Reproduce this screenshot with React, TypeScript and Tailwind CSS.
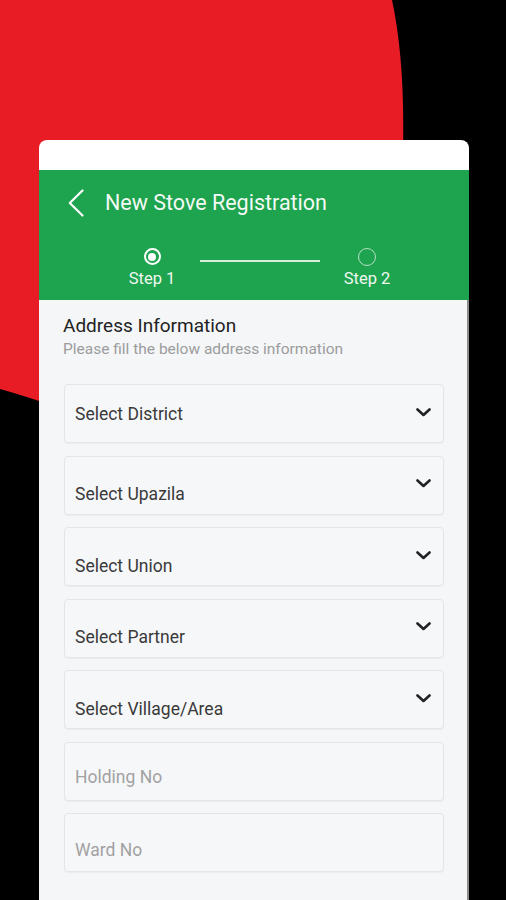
import React from "react";

type FieldTypes = {
  label: string;
  kind: "select" | "input";
  offset: string;
};

const fields: FieldTypes[] = [
  { label: "Select District", kind: "select", offset: "mt-0" },
  { label: "Select Upazila", kind: "select", offset: "mt-[18px]" },
  { label: "Select Union", kind: "select", offset: "mt-[18px]" },
  { label: "Select Partner", kind: "select", offset: "mt-[18px]" },
  { label: "Select Village/Area", kind: "select", offset: "mt-[18px]" },
  { label: "Holding No", kind: "input", offset: "mt-[12px]" },
  { label: "Ward No", kind: "input", offset: "mt-[14px]" },
];

function Chevron() {
  return (
    <svg width="15" height="9" viewBox="0 0 15 9" className="mb-[3px] shrink-0">
      <polyline
        points="1.5,1.5 7.5,7 13.5,1.5"
        fill="none"
        stroke="#222"
        strokeWidth="2.6"
        strokeLinecap="round"
        strokeLinejoin="round"
      />
    </svg>
  );
}

export default function App() {
  return (
    <div className="relative w-full h-[900px] bg-black overflow-hidden font-['Roboto',sans-serif]">
      {/* red blob behind the card */}
      <svg
        width="506"
        height="420"
        viewBox="0 0 506 420"
        className="absolute left-0 top-0"
      >
        <path
          d="M0 0 H392 Q405 60 403 150 L60 408 Q25 396 0 389 Z"
          fill="#e81c24"
        />
      </svg>

      <div className="relative pt-[140px] pl-[39px]">
        <div className="w-[430px] rounded-t-[8px] overflow-hidden">
          <div className="h-[30px] bg-white" />

          <div className="h-[130px] bg-[#1ea34e] text-white">
            <div className="h-[66px] flex items-center pl-[29px]">
              <svg width="16" height="28" viewBox="0 0 16 28">
                <polyline
                  points="14.5,1.5 1.8,14 14.5,26.5"
                  fill="none"
                  stroke="white"
                  strokeWidth="2.2"
                  strokeLinecap="round"
                  strokeLinejoin="round"
                />
              </svg>
              <span className="ml-[21px] text-[21.5px] leading-[26px] text-[#f3faf5]">
                New Stove Registration
              </span>
            </div>

            <div className="flex items-start pl-[83px]">
              <div className="w-[60px] flex flex-col items-center mt-[12px]">
                <div className="w-[17px] h-[17px] rounded-full border-2 border-white flex items-center justify-center">
                  <div className="w-[8px] h-[8px] rounded-full bg-white" />
                </div>
                <span className="mt-[4px] text-[16.5px] leading-[20px] text-[#eef8f1]">
                  Step 1
                </span>
              </div>
              <div className="ml-[18px] mt-[24px] w-[120px] h-[2px] bg-[#d5eedc]" />
              <div className="ml-[17px] w-[60px] flex flex-col items-center mt-[12px]">
                <div className="w-[18px] h-[18px] rounded-full border-[1.5px] border-[#b6dfc3]" />
                <span className="mt-[3px] text-[16.5px] leading-[20px] text-[#eef8f1]">
                  Step 2
                </span>
              </div>
            </div>
          </div>

          <div className="bg-[#f5f6f8] border-r-2 border-[#8a8a8a] px-6 pt-[14px] pb-[60px]">
            <h2 className="text-[19px] leading-[24px] text-[#222]">
              Address Information
            </h2>
            <p className="mt-[1px] text-[15.5px] leading-[20px] text-[#9c9c9c]">
              Please fill the below address information
            </p>

            <div className="mt-[25px] flex flex-col gap-[12.5px]">
              {fields.map((f) => (
                <div
                  key={f.label}
                  className="h-[59px] ml-[1px] mr-[-1px] flex items-center justify-between pl-[10px] pr-[12px] rounded-[4px] border border-[#e3e5e8] bg-[#f6f7f9] shadow-[0_1px_1px_rgba(0,0,0,0.04)]"
                >
                  <span
                    className={`${f.offset} text-[17.5px] leading-[22px] ${
                      f.kind === "select" ? "text-[#3a3a3a]" : "text-[#a2a2a2]"
                    }`}
                  >
                    {f.label}
                  </span>
                  {f.kind === "select" && <Chevron />}
                </div>
              ))}
            </div>
          </div>
        </div>
      </div>
    </div>
  );
}
